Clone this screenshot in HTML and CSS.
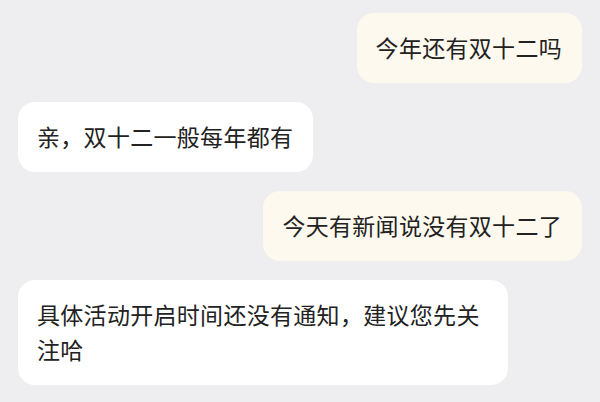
FILE: index.html
```html
<!DOCTYPE html>
<html lang="zh-CN">
<head>
<meta charset="utf-8">
<link rel="stylesheet" href="styles.css">
</head>
<body>
<div class="chat">
  <div class="msg me">今年还有双十二吗</div>
  <div class="msg other">亲，双十二一般每年都有</div>
  <div class="msg me">今天有新闻说没有双十二了</div>
  <div class="msg other wide">具体活动开启时间还没有通知，建议您先关注哈</div>
</div>
</body>
</html>
```
FILE: styles.css
```css
html, body {
  margin: 0;
  padding: 0;
  background: #eeeef0;
}
body {
  width: 600px;
  height: 402px;
  overflow: hidden;
  font-family: "Noto Sans CJK SC", "Noto Sans", sans-serif;
  color: #222222;
}
.chat {
  display: flex;
  flex-direction: column;
  gap: 19px;
  padding: 13px 18px 0 18px;
}
.msg {
  box-sizing: border-box;
  font-size: 23px;
  letter-spacing: 0.3px;
  line-height: 35px;
  padding: 17px 20px 18px 19px;
  border-radius: 17px;
  max-width: 490px;
}
.me {
  align-self: flex-end;
  background: #fdf9ee;
}
.other {
  align-self: flex-start;
  background: #ffffff;
}
```
